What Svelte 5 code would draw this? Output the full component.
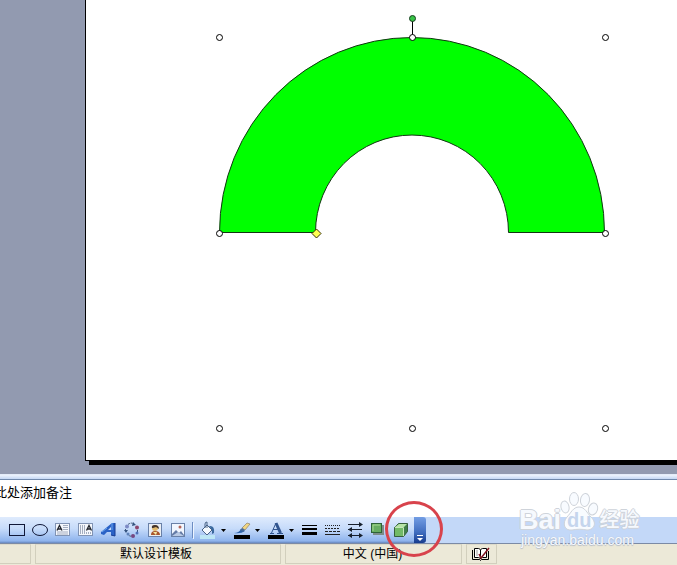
<script lang="ts">
  const handles = [
    [219, 37], [412, 37], [605, 37],
    [219, 233], [605, 233],
    [219, 428], [412, 428], [605, 428]
  ];
  const shapeTools = [
    ['rect', '矩形'], ['oval', '椭圆'], ['textbox', '文本框'], ['vtext', '竖排文本框'],
    ['wordart', '艺术字'], ['diagram', '组织结构图'], ['clip', '剪贴画'], ['picture', '图片']
  ];
  const colorTools = [['fill', '填充颜色'], ['line', '线条颜色'], ['font', '字体颜色']];
  const styleTools = [
    ['weight', '线型'], ['dash', '虚线线型'], ['arrows', '箭头样式'], ['shadow', '阴影样式'], ['cube', '三维效果样式']
  ];
</script>

{#snippet icon(name: string)}
  <svg width="18" height="18" viewBox="0 0 18 18" aria-hidden="true">
    {#if name === 'rect'}
      <rect x="1.5" y="3.5" width="15" height="11" fill="none" stroke="#101838" />
    {:else if name === 'oval'}
      <ellipse cx="9" cy="9" rx="7.5" ry="5.5" fill="none" stroke="#101838" />
    {:else if name === 'textbox'}
      <rect x="1.5" y="2.5" width="14" height="12" fill="#f4f7fc" stroke="#8093b4" />
      <path d="M3 9.5 5.500 4.500 8 9.500M4 8h3" fill="none" stroke="#20242c" stroke-width="1.300" />
      <path d="M9 4.500h5M9 6.500h5M9 8.500h5M3 11h11M3 13h11" stroke="#8f9bb0" stroke-width=".8" />
    {:else if name === 'vtext'}
      <rect x="1.500" y="2.500" width="14" height="12" fill="#f4f7fc" stroke="#8093b4" />
      <path d="M9.500 9.500 12 4.500l2.500 5M10.500 8h3" fill="none" stroke="#20242c" stroke-width="1.300" />
      <path d="M3.500 4v9M5.500 4v9M7.500 4v9M9.500 11v2M11.500 11v2M13.500 11v2" stroke="#8f9bb0" stroke-width=".8" />
    {:else if name === 'wordart'}
      <path d="M1 11 12 2h3v13l-4-1v-3H7l-3 3-3-1zM8 9h3V6z" fill="#2a62c6" fill-rule="evenodd" />
      <path d="M12 2v7M2 11l5-4" stroke="#6ba5ee" />
      <path d="M15 2v13l-4-1" fill="none" stroke="#173b91" />
    {:else if name === 'diagram'}
      <path d="M5 3.500Q8 1 11 3M14.500 9v3M11 15Q8 16 5 14M2.500 10V8" fill="none" stroke="#405878" stroke-dasharray="2 1" />
      <path d="m10 1 3 3-4 1zM1 9h4l-2 3z" fill="#34527e" />
      <circle cx="4" cy="5.500" r="2" fill="#7d8bc5" /><circle cx="14" cy="6.500" r="2" fill="#8d456c" />
      <circle cx="5" cy="13" r="1.500" fill="#5f83ba" /><circle cx="10" cy="15" r="2" fill="#754781" /><circle cx="14" cy="12" r="1.500" fill="#4e70b8" />
    {:else if name === 'clip'}
      <rect x="2.500" y="2.500" width="13" height="13" fill="#e9edf3" stroke="#6980a7" />
      <path d="M5 14q0-4 4-4 5 0 5 4z" fill="#a8572d" /><path d="M7 11h4l-1 3z" fill="#f5e9a5" />
      <circle cx="9" cy="7" r="3" fill="#e1b96c" /><path d="M6 7q-1-3 3-3 4 0 4 4l-3-2-3 1z" fill="#42342c" />
    {:else if name === 'picture'}
      <rect x="2.500" y="2.500" width="13" height="13" fill="#f1f6ff" stroke="#6980a7" />
      <path d="m3 13 4-4 3 3 2-2 3 4v1H3z" fill="#647ba6" /><path d="m3 15 6-4 6 4z" fill="#b9c9e4" />
      <circle cx="11" cy="6" r="1.500" fill="#b46458" />
    {:else if name === 'fill'}
      <rect x="1" y="14" width="15" height="4" fill="#bde6f5" />
      <path d="m3 9 5-5 5 5-5 5z" fill="#f5faff" stroke="#496386" />
      <path d="M6 7V3q0-2 2-2v6" fill="none" stroke="#496386" />
      <path d="M10 5q6-1 5 7l-2 1V9z" fill="#39689d" />
    {:else if name === 'line'}
      <rect x="1" y="14" width="16" height="4" fill="#000" />
      <path d="M1 12q5 0 7-4l4 2q-4 3-11 2z" fill="#2e65ae" />
      <path d="m9 7 5-5 3 1-5 6z" fill="#f0d582" stroke="#8c806a" stroke-width=".7" /><path d="m9 7 3 2-2 2-3-2z" fill="#456b9c" />
    {:else if name === 'font'}
      <rect x="1" y="14" width="16" height="4" fill="#000" />
      <path d="M3 12.500h4M10 12.500h6M4.500 12 9 2M6 8.500h6" fill="none" stroke="#31558f" />
      <path d="m9 2 4.500 10" stroke="#31558f" stroke-width="3" />
    {:else if name === 'weight'}
      <path d="M2 4.500h15" stroke="#000" /><path d="M2 8h15" stroke="#000" stroke-width="2" /><path d="M2 12.500h15" stroke="#000" stroke-width="3" />
    {:else if name === 'dash'}
      <path d="M2 4.500h15" stroke="#222" stroke-dasharray="1 1" /><path d="M2 7.500h15" stroke="#222" stroke-dasharray="2 1" />
      <path d="M2 10.500h15" stroke="#222" stroke-dasharray="3 1" /><path d="M2 13.500h15" stroke="#222" />
    {:else if name === 'arrows'}
      <path d="M2 3.500h14M2 8.500h14M2 14.500h14" stroke="#17202d" />
      <path d="m13 1 4 2.500L13 6zM6 6 2 8.500 6 11zM6 12l-4 2.500L6 17zM13 12l4 2.500-4 2.500z" fill="#17202d" />
    {:else if name === 'shadow'}
      <rect x="4" y="4" width="11" height="10" fill="#7b8c88" />
      <rect x="2.500" y="2.500" width="10" height="9" fill="#67ad61" stroke="#2e6338" /><path d="M4 10V4h7" fill="none" stroke="#a7d990" />
    {:else if name === 'cube'}
      <path d="m2.500 6.500 4-4h9v8l-4 5h-9z" fill="#3f7f48" stroke="#365f3c" />
      <path d="m3 6 4-3h8l-3 3z" fill="#b5e4a6" /><path d="M3 7h8v8H3z" fill="#72ba68" />
      <path d="M3 6.500h8.500v8.500" fill="none" stroke="#c5e6ba" />
    {/if}
  </svg>
{/snippet}

<div class="app">
  <main class="workspace">
    <section class="slide" aria-label="幻灯片">
      <svg class="drawing" width="591" height="460" viewBox="86 0 591 460" aria-label="空心弧">
        <path d="M219.500 232.500A192.500 195 0 0 1 604.500 232.500H508.500A96.500 97.500 0 0 0 315.500 232.500Z" fill="#0f0" stroke="#123512" />
        <path d="M412.500 19v18" stroke="#000" />
        <circle cx="412.500" cy="18.500" r="3" fill="#38c346" stroke="#173d20" />
        {#each handles as [x, y]}
          <circle cx={x + 0.5} cy={y + 0.5} r="3" fill="#fff" stroke="#000" />
        {/each}
        <path d="m316.500 229 4.500 4.500-4.500 4.500-4.500-4.500z" fill="#ffff52" stroke="#383000" />
      </svg>
    </section>
  </main>
  <div class="splitter"></div>
  <section class="notes" aria-label="备注"><p>此处添加备注</p></section>

  <div class="dock">
    <div class="toolbar" role="toolbar" aria-label="绘图">
      {#each shapeTools as [name, label]}
        <button class="tool" aria-label={label}>{@render icon(name)}</button>
      {/each}
      <span class="separator"></span>
      <div class="colors">
        {#each colorTools as [name, label]}
          <div class="split">
            <button class="tool" aria-label={label}>{@render icon(name)}</button>
            <button class="drop" aria-label={label + '选项'}><svg width="5" height="3" viewBox="0 0 5 3"><path d="M0 0h5L2.500 3z" /></svg></button>
          </div>
        {/each}
      </div>
      {#each styleTools as [name, label]}
        <button class="tool" aria-label={label}>{@render icon(name)}</button>
      {/each}
    </div>
    <button class="overflow" aria-label="工具栏选项">
      <svg width="8" height="8" viewBox="0 0 8 8"><path d="M1 1.500h6" stroke="#fff" /><path d="M1 4h6L4 7z" fill="#fff" /></svg>
    </button>
    <div class="highlight"></div>
    <div class="watermark">
      <svg class="paw" width="38" height="40" viewBox="0 0 38 40" aria-hidden="true">
        <ellipse cx="5" cy="15" rx="4" ry="6" transform="rotate(-12 5 15)" />
        <ellipse cx="14" cy="7" rx="4.500" ry="6.500" />
        <ellipse cx="25" cy="8" rx="4.500" ry="6.500" transform="rotate(8 25 8)" />
        <ellipse cx="33" cy="17" rx="4.500" ry="6" transform="rotate(18 33 17)" />
        <path d="M19 15c6 0 8 6 12 10 7 7 2 13-4 13-5-1-10-1-15 0-8 1-10-7-5-13 4-4 6-10 12-10z" />
      </svg>
      <div class="brand"><span>Bai</span><span class="du">du</span><span class="exp">经验</span></div>
      <div class="site">jingyan.baidu.com</div>
    </div>
  </div>

  <footer class="status">
    <span class="cell page"></span>
    <span class="cell template">默认设计模板</span>
    <span class="cell language">中文 (中国)</span>
    <span class="cell spelling">
      <svg width="20" height="14" viewBox="0 0 20 14" aria-label="拼写检查">
        <path d="M3.500 1.500h4l2 1 2-1h4v9h-4l-2 1-2-1h-4z" fill="#fff" stroke="#000" />
        <path d="M1.500 3v9.500h7l1 1 1-1h7V4M9.500 3v9" fill="none" stroke="#000" />
        <path d="M5 4h2M5 6h2M5 8h2" stroke="#999" />
        <path d="m8 7 2 4L18 1" fill="none" stroke="#841824" stroke-width="1.500" />
      </svg>
    </span>
  </footer>
</div>

<style>
  :global(body) { margin: 0; }
  .app {
    min-height: 100vh;
    display: flex;
    flex-direction: column;
    overflow: hidden;
    font-family: "Liberation Sans", "Noto Sans CJK SC", sans-serif;
    font-size: 12px;
    color: #000;
  }
  button {
    padding: 0;
    border: 0;
    background: none;
    display: flex;
    align-items: center;
    justify-content: center;
  }
  svg { display: block; flex: none; }
  .workspace {
    flex: 1;
    display: flex;
    padding: 0 0 13px 85px;
    background: #929ab0;
    overflow: hidden;
  }
  .slide {
    flex: 1;
    min-width: 0;
    background: #fff;
    border: solid #000;
    border-width: 0 0 1px 1px;
    box-shadow: 4px 4px 0 #000;
    overflow: hidden;
  }
  .splitter {
    height: 4px;
    background: linear-gradient(#eef4fd, #c5d8f5);
    border-top: 1px solid #e4ecf9;
    border-bottom: 1px solid #7089ad;
  }
  .notes { height: 37px; background: #fff; }
  .notes p {
    margin: 0;
    padding-top: 4px;
    font-size: 13px;
    line-height: 18px;
    text-indent: -6px;
    white-space: nowrap;
  }
  .dock {
    position: relative;
    display: flex;
    height: 26px;
    background: #c3d8f8;
    border-bottom: 1px solid #7b8aa5;
  }
  .toolbar {
    display: flex;
    align-items: center;
    padding: 0 2px 0 5px;
    background: linear-gradient(#dfebfd, #c6dbfa 45%, #8fb4ed 92%, #6687be);
  }
  .tool { width: 23px; height: 24px; }
  .separator {
    width: 1px;
    height: 16px;
    margin: 0 4px 0 3px;
    background: #6c8cc2;
    box-shadow: 1px 1px 0 #eef5ff;
  }
  .colors { display: flex; gap: 3px; padding-right: 1px; }
  .split { display: flex; }
  .split .tool { width: 22px; }
  .drop { width: 9px; }
  .overflow {
    width: 12px;
    align-items: flex-end;
    padding-bottom: 1px;
    background: linear-gradient(#729de4, #3f6cbe 60%, #173c8d);
    border-radius: 0 3px 3px 0;
  }
  .highlight {
    position: absolute;
    left: 385px;
    top: -16px;
    width: 52px;
    height: 50px;
    border: 3px solid #d8434c;
    border-radius: 50%;
    z-index: 1;
  }
  .watermark {
    position: absolute;
    right: 38px;
    top: -26px;
    width: 120px;
    height: 58px;
    color: #f6f9fe;
    z-index: 1;
  }
  .paw {
    position: absolute;
    left: 41px;
    top: 1px;
    fill: #f8fbff;
    stroke: #ced3da;
    overflow: visible;
  }
  .brand {
    position: absolute;
    left: 0;
    top: 14px;
    display: flex;
    align-items: center;
    font-size: 27px;
    line-height: 30px;
    font-weight: 700;
    white-space: nowrap;
    text-shadow: -1px 0 #ced3da, 1px 0 #ced3da, 0 -1px #ced3da, 0 1px #ced3da;
  }
  .du {
    margin-left: 6px;
    color: #c5d5ed;
    font-size: 20px;
    text-shadow: none;
  }
  .exp { margin-left: 8px; font-size: 20px; font-weight: 500; }
  .site {
    position: absolute;
    left: 2px;
    top: 41px;
    font-size: 14px;
    line-height: 16px;
    text-shadow: 0 0 1px #a9b7cc, 0 1px 1px #b9bec6;
  }
  .status {
    display: flex;
    gap: 4px;
    height: 22px;
    background: #ece9d8;
  }
  .cell {
    box-sizing: border-box;
    height: 20px;
    display: flex;
    justify-content: center;
    align-items: center;
    line-height: 18px;
    border: 1px solid #d2cfbd;
    border-top-color: #dedbcb;
    white-space: nowrap;
  }
  .page { width: 31px; border-left: 0; }
  .template { width: 246px; padding-right: 4px; }
  .language { width: 177px; padding-right: 2px; }
  .spelling { width: 31px; padding-right: 2px; }
</style>
